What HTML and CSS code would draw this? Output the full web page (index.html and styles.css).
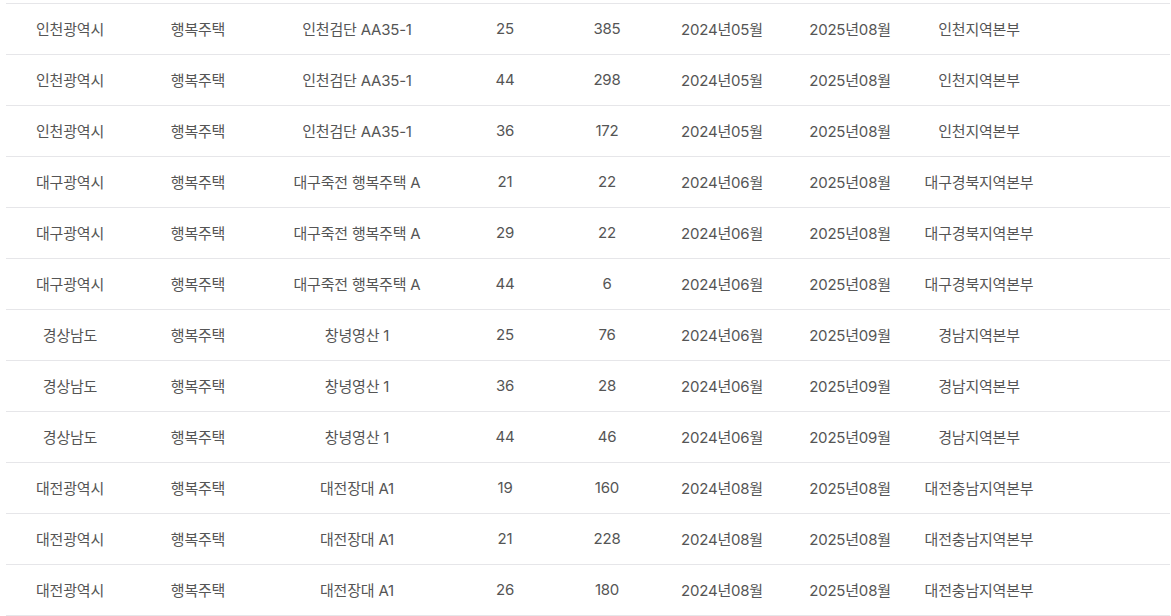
FILE: index.html
```html
<!DOCTYPE html>
<html lang="ko">
<head>
<meta charset="utf-8">
<link rel="stylesheet" href="styles.css">
</head>
<body>
<div class="wrap">
<table class="list">
<colgroup>
<col class="c1"><col class="c2"><col class="c3"><col class="c4"><col class="c5"><col class="c6"><col class="c7"><col class="c8"><col class="c9">
</colgroup>
<tbody>
<tr><td>인천광역시</td><td>행복주택</td><td>인천검단 AA35-1</td><td>25</td><td>385</td><td>2024년05월</td><td>2025년08월</td><td>인천지역본부</td><td></td></tr>
<tr><td>인천광역시</td><td>행복주택</td><td>인천검단 AA35-1</td><td>44</td><td>298</td><td>2024년05월</td><td>2025년08월</td><td>인천지역본부</td><td></td></tr>
<tr><td>인천광역시</td><td>행복주택</td><td>인천검단 AA35-1</td><td>36</td><td>172</td><td>2024년05월</td><td>2025년08월</td><td>인천지역본부</td><td></td></tr>
<tr><td>대구광역시</td><td>행복주택</td><td>대구죽전 행복주택 A</td><td>21</td><td>22</td><td>2024년06월</td><td>2025년08월</td><td>대구경북지역본부</td><td></td></tr>
<tr><td>대구광역시</td><td>행복주택</td><td>대구죽전 행복주택 A</td><td>29</td><td>22</td><td>2024년06월</td><td>2025년08월</td><td>대구경북지역본부</td><td></td></tr>
<tr><td>대구광역시</td><td>행복주택</td><td>대구죽전 행복주택 A</td><td>44</td><td>6</td><td>2024년06월</td><td>2025년08월</td><td>대구경북지역본부</td><td></td></tr>
<tr><td>경상남도</td><td>행복주택</td><td>창녕영산 1</td><td>25</td><td>76</td><td>2024년06월</td><td>2025년09월</td><td>경남지역본부</td><td></td></tr>
<tr><td>경상남도</td><td>행복주택</td><td>창녕영산 1</td><td>36</td><td>28</td><td>2024년06월</td><td>2025년09월</td><td>경남지역본부</td><td></td></tr>
<tr><td>경상남도</td><td>행복주택</td><td>창녕영산 1</td><td>44</td><td>46</td><td>2024년06월</td><td>2025년09월</td><td>경남지역본부</td><td></td></tr>
<tr><td>대전광역시</td><td>행복주택</td><td>대전장대 A1</td><td>19</td><td>160</td><td>2024년08월</td><td>2025년08월</td><td>대전충남지역본부</td><td></td></tr>
<tr><td>대전광역시</td><td>행복주택</td><td>대전장대 A1</td><td>21</td><td>228</td><td>2024년08월</td><td>2025년08월</td><td>대전충남지역본부</td><td></td></tr>
<tr><td>대전광역시</td><td>행복주택</td><td>대전장대 A1</td><td>26</td><td>180</td><td>2024년08월</td><td>2025년08월</td><td>대전충남지역본부</td><td></td></tr>
</tbody>
</table>
</div>
</body>
</html>
```
FILE: styles.css
```css
html, body {
  margin: 0;
  padding: 0;
  background: #fff;
}
.wrap {
  padding: 3px 1px 0 6px;
}
.list {
  width: 1164px;
  table-layout: fixed;
  border-collapse: collapse;
  font-family: Inter, "Noto Sans CJK KR", sans-serif;
  font-size: 15px;
  letter-spacing: -0.2px;
  color: #555;
  border-top: 1px solid #e6e6e9;
}
.list td {
  height: 48px;
  padding: 0 0 2px;
  text-align: center;
  vertical-align: middle;
  border-bottom: 1px solid #e6e6e9;
  white-space: nowrap;
}
.c1 { width: 128px; }
.c2 { width: 128px; }
.c3 { width: 190px; }
.c4 { width: 106px; }
.c5 { width: 98px; }
.c6 { width: 132px; }
.c7 { width: 124px; }
.c8 { width: 134px; }
.c9 { width: 124px; }
```
